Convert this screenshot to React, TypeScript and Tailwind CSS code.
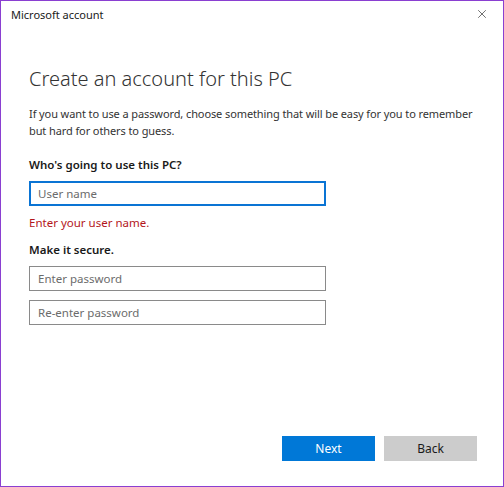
import { X } from 'lucide-react';

export default function App() {
  return (
    <div className="w-[504px] h-[487px] bg-white border border-[#8a3fd1] flex flex-col text-[#1a1a1a]" style={{ fontFamily: '"Noto Sans", "Liberation Sans", sans-serif' }}>
      {/* Title bar */}
      <div className="h-[26px] flex items-center justify-between pl-[10px] pr-[14px] shrink-0">
        <span className="text-[11px] leading-none">Microsoft account</span>
        <X size={14} strokeWidth={1.2} className="text-[#333]" />
      </div>

      <div className="flex-1 flex flex-col pl-[28px] pr-[20px]">
        <h1 className="mt-[38px] text-[20px] leading-[28px] font-light text-[#333]">Create an account for this PC</h1>
        <p className="mt-[12px] text-[11px] leading-[17px] tracking-[-0.1px] text-[#333]">
          If you want to use a password, choose something that will be easy for you to remember but hard for others to guess.
        </p>

        <div className="mt-[18px] text-[11.5px] font-semibold leading-[16px]">Who's going to use this PC?</div>
        <div className="mt-[8px] w-[297px] h-[25px] border-2 border-[#0a74d4] flex items-center px-[7px] text-[11.5px] text-[#6b6b6b]">User name</div>
        <div className="mt-[9px] text-[11.5px] leading-[16px] text-[#b3161b]">Enter your user name.</div>

        <div className="mt-[11px] text-[11.5px] font-semibold leading-[16px]">Make it secure.</div>
        <div className="mt-[8px] w-[297px] h-[25px] border border-[#8a8a8a] flex items-center px-[8px] text-[11.5px] text-[#6b6b6b]">Enter password</div>
        <div className="mt-[9px] w-[297px] h-[25px] border border-[#8a8a8a] flex items-center px-[8px] text-[11.5px] text-[#6b6b6b]">Re-enter password</div>

        <div className="mt-auto mb-[25px] mr-[6px] flex justify-end gap-[9px]">
          <button className="w-[93px] h-[25px] bg-[#0078d7] text-white text-[12px]">Next</button>
          <button className="w-[93px] h-[25px] bg-[#cccccc] text-[#1a1a1a] text-[12px]">Back</button>
        </div>
      </div>
    </div>
  );
}
